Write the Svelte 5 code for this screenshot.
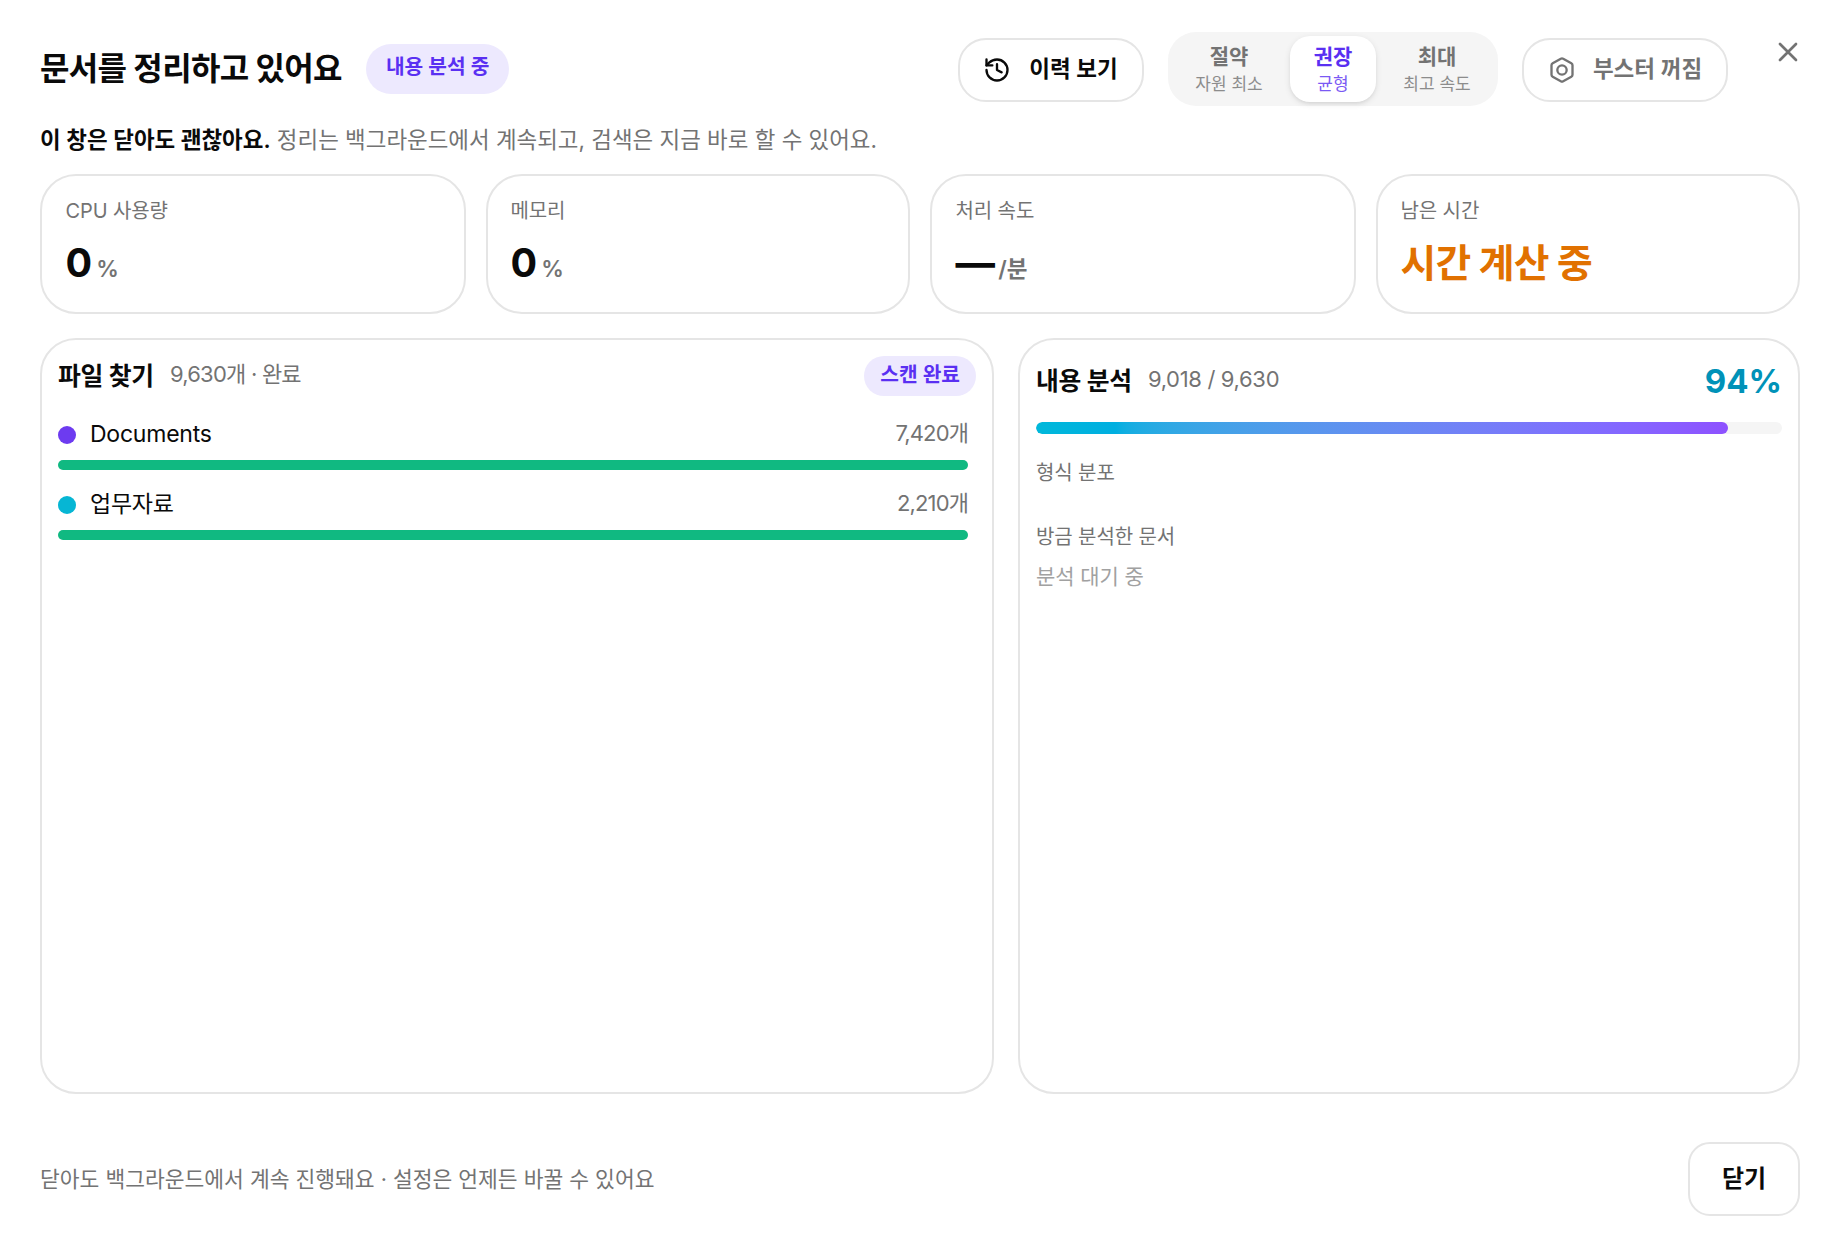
<script lang="ts">
	type Mode = 'eco' | 'balanced' | 'max';

	const modes: { id: Mode; label: string; hint: string }[] = [
		{ id: 'eco', label: '절약', hint: '자원 최소' },
		{ id: 'balanced', label: '권장', hint: '균형' },
		{ id: 'max', label: '최대', hint: '최고 속도' }
	];

	const stats = [
		{ label: 'CPU 사용량', value: '0', unit: '%' },
		{ label: '메모리', value: '0', unit: '%' },
		{ label: '처리 속도', value: '—', unit: '/분', tight: true },
		{ label: '남은 시간', value: '시간 계산 중', unit: '', warn: true }
	];

	const folders = [
		{ name: 'Documents', count: 7420, color: '#6d3bf0' },
		{ name: '업무자료', count: 2210, color: '#06b6d4' }
	];

	let mode = $state<Mode>('balanced');
	let barWidth = $state(92.76);

	const total = $derived(folders.reduce((sum, f) => sum + f.count, 0));
	const analyzed = 9018;
	const percent = $derived(Math.round((analyzed / total) * 100));

	function fmt(n: number): string {
		return n.toLocaleString('en-US');
	}
</script>

<div class="dialog">
	<header class="head">
		<h1>문서를 정리하고 있어요</h1>
		<span class="badge">내용 분석 중</span>
		<div class="actions">
			<button type="button" class="pill history">
				<svg viewBox="0 0 24 24">
					<path d="M3 12a9 9 0 1 0 9-9 9.75 9.75 0 0 0-6.74 2.74L3 8" />
					<path d="M3 3v5h5" />
					<path d="M12 7v5l4 2" />
				</svg>
				<span>이력 보기</span>
			</button>
			<div class="modes">
				{#each modes as m (m.id)}
					<button type="button" class="mode" class:active={mode === m.id} onclick={() => (mode = m.id)}>
						<span class="mode-label">{m.label}</span>
						<span class="mode-hint">{m.hint}</span>
					</button>
				{/each}
			</div>
			<button type="button" class="pill booster">
				<svg viewBox="0 0 24 24">
					<path d="M21 16V8a2 2 0 0 0-1-1.73l-7-4a2 2 0 0 0-2 0l-7 4A2 2 0 0 0 3 8v8a2 2 0 0 0 1 1.73l7 4a2 2 0 0 0 2 0l7-4A2 2 0 0 0 21 16z" />
					<circle cx="12" cy="12" r="4" />
				</svg>
				<span>부스터 꺼짐</span>
			</button>
		</div>
		<button type="button" class="close" aria-label="닫기">
			<svg viewBox="0 0 24 24"><path d="M18 6 6 18M6 6l12 12" /></svg>
		</button>
	</header>

	<p class="note"><strong>이 창은 닫아도 괜찮아요.</strong> 정리는 백그라운드에서 계속되고, 검색은 지금 바로 할 수 있어요.</p>

	<section class="stats">
		{#each stats as s (s.label)}
			<div class="stat">
				<div class="stat-label">{s.label}</div>
				<div class="stat-row" class:tight={s.tight}>
					<span class="stat-value" class:warn={s.warn}>{s.value}</span>
					{#if s.unit}<span class="stat-unit">{s.unit}</span>{/if}
				</div>
			</div>
		{/each}
	</section>

	<section class="panels">
		<div class="panel">
			<div class="scan-head">
				<h2>파일 찾기</h2>
				<span class="meta">{fmt(total)}개 · 완료</span>
				<span class="badge small">스캔 완료</span>
			</div>
			<ul class="folders">
				{#each folders as f (f.name)}
					<li>
						<div class="folder-row">
							<span class="dot" style="background: {f.color}"></span>
							<span class="folder-name">{f.name}</span>
							<span class="folder-count">{fmt(f.count)}개</span>
						</div>
						<div class="folder-bar"></div>
					</li>
				{/each}
			</ul>
		</div>

		<div class="panel">
			<div class="analyze-head">
				<h2>내용 분석</h2>
				<span class="meta">{fmt(analyzed)} / {fmt(total)}</span>
				<span class="percent">{percent}%</span>
			</div>
			<div class="track"><div class="fill" style="width: {barWidth}%"></div></div>
			<div class="sub formats">형식 분포</div>
			<div class="sub recent">방금 분석한 문서</div>
			<div class="waiting">분석 대기 중</div>
		</div>
	</section>

	<footer class="foot">
		<span>닫아도 백그라운드에서 계속 진행돼요 · 설정은 언제든 바꿀 수 있어요</span>
		<button type="button" class="done">닫기</button>
	</footer>
</div>

<style>
	:global(body) {
		background: #fff;
	}
	.dialog {
		box-sizing: border-box;
		width: 1840px;
		height: 1240px;
		padding: 32px 40px 24px;
		display: flex;
		flex-direction: column;
		background: #fff;
		color: #0a0a0a;
		font-family: Inter, 'Noto Sans CJK KR', sans-serif;
		font-size: 22px;
		white-space: nowrap;
	}
	.dialog * { box-sizing: border-box; }
	h1, h2, p, ul { margin: 0; padding: 0; }
	ul { list-style: none; }
	button {
		font: inherit;
		color: inherit;
		background: none;
		border: 0;
		padding: 0;
		cursor: pointer;
	}
	svg {
		fill: none;
		stroke: currentColor;
		stroke-width: 2;
		stroke-linecap: round;
		stroke-linejoin: round;
		flex-shrink: 0;
	}

	.head {
		height: 74px;
		display: flex;
		align-items: center;
	}
	h1 {
		font-size: 32px;
		font-weight: 700;
		line-height: 40px;
		letter-spacing: -0.02em;
		margin-right: 24px;
	}
	.badge {
		height: 50px;
		padding: 0 20px;
		border-radius: 25px;
		background: #ede9fe;
		color: #5a30f2;
		font-size: 20.3px;
		font-weight: 600;
		line-height: 46px;
	}
	.actions {
		margin-left: auto;
		display: flex;
		align-items: center;
		gap: 24px;
	}
	.pill {
		height: 64px;
		margin-top: 2px;
		border: 2px solid #e5e5e5;
		border-radius: 28px;
		display: flex;
		align-items: center;
		justify-content: center;
		gap: 18px;
		font-size: 22.5px;
		font-weight: 600;
	}
	.pill svg { width: 28px; height: 28px; }
	.pill span { line-height: 30px; margin-top: -2px; }
	.history { width: 186px; padding-right: 1px; }
	.booster { width: 206px; gap: 17px; color: #737373; }

	.modes {
		height: 74px;
		padding: 4px;
		display: flex;
		gap: 4px;
		border-radius: 28px;
		background: #f5f5f5;
	}
	.mode {
		width: 114px;
		border-radius: 20px;
		display: flex;
		flex-direction: column;
		align-items: center;
		justify-content: center;
		color: #737373;
	}
	.mode.active {
		width: 86px;
		background: #fff;
		color: #5a30f2;
		box-shadow: 0 2px 6px rgba(0, 0, 0, 0.1), 0 2px 4px -2px rgba(0, 0, 0, 0.1);
	}
	.mode-label { margin-top: 2px; font-size: 21px; font-weight: 600; line-height: 27px; }
	.mode-hint { padding-top: 1px; font-size: 17px; line-height: 27px; opacity: 0.8; }

	.close {
		align-self: flex-start;
		width: 32px;
		height: 32px;
		margin: 4px -4px 0 44px;
		color: #737373;
	}
	.close svg { width: 32px; height: 32px; display: block; }

	.note {
		margin-top: 17px;
		font-size: 22.45px;
		line-height: 34px;
		color: #737373;
	}
	.note strong { font-weight: 600; color: #0a0a0a; }

	.stats {
		margin-top: 17px;
		display: grid;
		grid-template-columns: 426px 424px 426px 424px;
		gap: 20px;
	}
	.stat {
		height: 140px;
		padding: 21px 23.5px;
		border: 2px solid #e5e5e5;
		border-radius: 36px;
	}
	.stat:nth-child(even) { padding-left: 22.5px; }
	.stat-label { font-size: 20px; line-height: 28px; letter-spacing: -0.005em; color: #737373; }
	.stat-row {
		margin-top: 14px;
		display: flex;
		align-items: baseline;
		gap: 5px;
		line-height: 48px;
	}
	.stat-row.tight { gap: 4px; }
	.stat-value { font-size: 39.5px; font-weight: 700; letter-spacing: -0.02em; }
	.stat-value.warn { font-size: 38.8px; }
	.warn { color: #e17100; }
	.stat-unit { font-size: 22.5px; font-weight: 600; color: #737373; }

	.panels {
		margin-top: 24px;
		height: 756px;
		display: grid;
		grid-template-columns: 954px 782px;
		gap: 24px;
	}
	.panel {
		padding: 16px;
		border: 2px solid #e5e5e5;
		border-radius: 36px;
	}
	h2 { font-size: 24.8px; font-weight: 700; line-height: 40px; letter-spacing: -0.01em; }
	.meta { margin-left: 16px; font-size: 22px; line-height: 36px; letter-spacing: -0.015em; color: #737373; }
	.scan-head {
		height: 40px;
		display: flex;
		align-items: flex-start;
	}
	.scan-head .meta { letter-spacing: -0.035em; }
	.badge.small {
		height: 40px;
		margin-left: auto;
		padding: 0 16px;
		border-radius: 20px;
		line-height: 37px;
	}
	.folders { padding: 20px 8px 0 0; }
	.folders li { height: 70px; }
	.folder-row {
		height: 44px;
		display: flex;
		align-items: flex-start;
	}
	.dot { width: 18px; height: 18px; margin-top: 10px; border-radius: 50%; }
	.folder-name { margin-left: 14px; font-size: 23px; line-height: 36px; letter-spacing: -0.01em; }
	.folder-count {
		margin-left: auto;
		font-size: 22px;
		line-height: 34px;
		letter-spacing: -0.04em;
		color: #737373;
	}
	.folder-bar { height: 10px; border-radius: 5px; background: #10b981; }

	.analyze-head {
		height: 50px;
		display: flex;
		align-items: center;
	}
	.analyze-head .meta { margin-top: -5px; }
	.percent { margin-left: auto; font-size: 33px; font-weight: 700; color: #0092b8; }
	.track {
		height: 12px;
		margin-top: 16px;
		border-radius: 6px;
		background: #f5f5f5;
		overflow: hidden;
	}
	.fill {
		height: 100%;
		border-radius: 6px;
		background: linear-gradient(to right in oklab, oklch(71.5% 0.143 215.221), oklch(60.6% 0.25 292.717));
	}
	.sub { font-size: 20px; line-height: 28px; letter-spacing: -0.005em; color: #737373; }
	.formats { margin-top: 25px; }
	.recent { margin-top: 36px; }
	.waiting { margin-top: 12px; font-size: 21px; line-height: 28px; letter-spacing: -0.005em; color: #a1a1a1; }

	.foot {
		margin-top: 48px;
		display: flex;
		align-items: center;
		justify-content: space-between;
		color: #737373;
		font-size: 21.5px;
	}
	.foot > span { margin-top: -4px; }
	.done {
		width: 112px;
		height: 74px;
		padding-bottom: 6px;
		border: 2px solid #e5e5e5;
		border-radius: 22px;
		color: #0a0a0a;
		font-size: 24px;
		font-weight: 600;
	}
</style>
